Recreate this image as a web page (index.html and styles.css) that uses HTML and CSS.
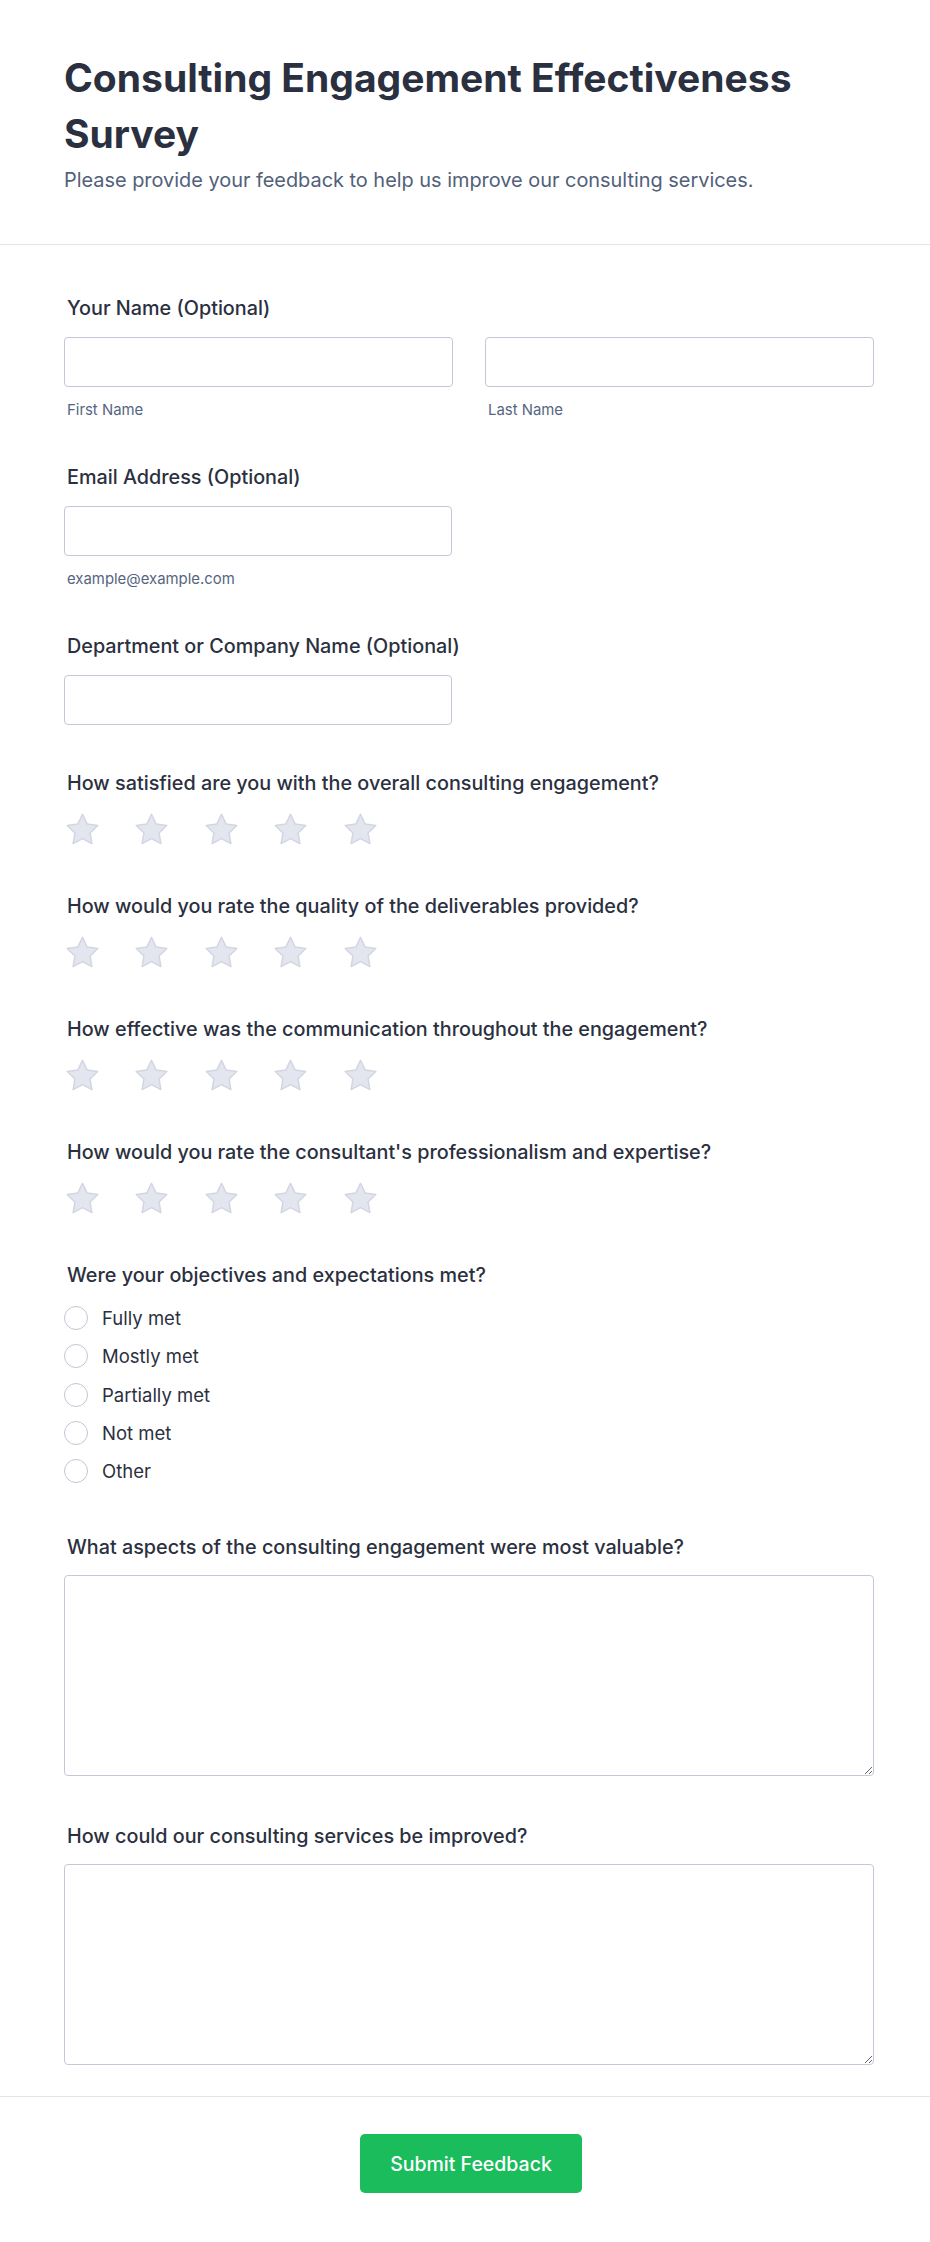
FILE: index.html
```html
<!DOCTYPE html>
<html lang="en">
<head>
<meta charset="utf-8">
<title>Consulting Engagement Effectiveness Survey</title>
<link rel="stylesheet" href="styles.css">
</head>
<body>
<div class="page">
  <header class="header">
    <h1 class="title">Consulting Engagement Effectiveness Survey</h1>
    <p class="subtitle">Please provide your feedback to help us improve our consulting services.</p>
  </header>

  <form class="form">
    <div class="field">
      <label class="label">Your Name (Optional)</label>
      <div class="name-grid">
        <div class="sub">
          <input class="input" type="text">
          <span class="hint">First Name</span>
        </div>
        <div class="sub">
          <input class="input" type="text">
          <span class="hint">Last Name</span>
        </div>
      </div>
    </div>

    <div class="field">
      <label class="label">Email Address (Optional)</label>
      <div class="half">
        <input class="input" type="email">
        <span class="hint">example@example.com</span>
      </div>
    </div>

    <div class="field">
      <label class="label">Department or Company Name (Optional)</label>
      <div class="half">
        <input class="input" type="text">
      </div>
    </div>

    <div class="field rating-field">
      <label class="label">How satisfied are you with the overall consulting engagement?</label>
      <div class="stars">
        <svg class="star" viewBox="0 0 40 38"><path d="M20 2.5l5.1 10.6 11.5 1.6-8.4 8.1 2 11.5L20 28.8l-10.2 5.5 2-11.5-8.4-8.1 11.5-1.6z"/></svg>
        <svg class="star" viewBox="0 0 40 38"><path d="M20 2.5l5.1 10.6 11.5 1.6-8.4 8.1 2 11.5L20 28.8l-10.2 5.5 2-11.5-8.4-8.1 11.5-1.6z"/></svg>
        <svg class="star" viewBox="0 0 40 38"><path d="M20 2.5l5.1 10.6 11.5 1.6-8.4 8.1 2 11.5L20 28.8l-10.2 5.5 2-11.5-8.4-8.1 11.5-1.6z"/></svg>
        <svg class="star" viewBox="0 0 40 38"><path d="M20 2.5l5.1 10.6 11.5 1.6-8.4 8.1 2 11.5L20 28.8l-10.2 5.5 2-11.5-8.4-8.1 11.5-1.6z"/></svg>
        <svg class="star" viewBox="0 0 40 38"><path d="M20 2.5l5.1 10.6 11.5 1.6-8.4 8.1 2 11.5L20 28.8l-10.2 5.5 2-11.5-8.4-8.1 11.5-1.6z"/></svg>
      </div>
    </div>

    <div class="field rating-field">
      <label class="label">How would you rate the quality of the deliverables provided?</label>
      <div class="stars">
        <svg class="star" viewBox="0 0 40 38"><path d="M20 2.5l5.1 10.6 11.5 1.6-8.4 8.1 2 11.5L20 28.8l-10.2 5.5 2-11.5-8.4-8.1 11.5-1.6z"/></svg>
        <svg class="star" viewBox="0 0 40 38"><path d="M20 2.5l5.1 10.6 11.5 1.6-8.4 8.1 2 11.5L20 28.8l-10.2 5.5 2-11.5-8.4-8.1 11.5-1.6z"/></svg>
        <svg class="star" viewBox="0 0 40 38"><path d="M20 2.5l5.1 10.6 11.5 1.6-8.4 8.1 2 11.5L20 28.8l-10.2 5.5 2-11.5-8.4-8.1 11.5-1.6z"/></svg>
        <svg class="star" viewBox="0 0 40 38"><path d="M20 2.5l5.1 10.6 11.5 1.6-8.4 8.1 2 11.5L20 28.8l-10.2 5.5 2-11.5-8.4-8.1 11.5-1.6z"/></svg>
        <svg class="star" viewBox="0 0 40 38"><path d="M20 2.5l5.1 10.6 11.5 1.6-8.4 8.1 2 11.5L20 28.8l-10.2 5.5 2-11.5-8.4-8.1 11.5-1.6z"/></svg>
      </div>
    </div>

    <div class="field rating-field">
      <label class="label">How effective was the communication throughout the engagement?</label>
      <div class="stars">
        <svg class="star" viewBox="0 0 40 38"><path d="M20 2.5l5.1 10.6 11.5 1.6-8.4 8.1 2 11.5L20 28.8l-10.2 5.5 2-11.5-8.4-8.1 11.5-1.6z"/></svg>
        <svg class="star" viewBox="0 0 40 38"><path d="M20 2.5l5.1 10.6 11.5 1.6-8.4 8.1 2 11.5L20 28.8l-10.2 5.5 2-11.5-8.4-8.1 11.5-1.6z"/></svg>
        <svg class="star" viewBox="0 0 40 38"><path d="M20 2.5l5.1 10.6 11.5 1.6-8.4 8.1 2 11.5L20 28.8l-10.2 5.5 2-11.5-8.4-8.1 11.5-1.6z"/></svg>
        <svg class="star" viewBox="0 0 40 38"><path d="M20 2.5l5.1 10.6 11.5 1.6-8.4 8.1 2 11.5L20 28.8l-10.2 5.5 2-11.5-8.4-8.1 11.5-1.6z"/></svg>
        <svg class="star" viewBox="0 0 40 38"><path d="M20 2.5l5.1 10.6 11.5 1.6-8.4 8.1 2 11.5L20 28.8l-10.2 5.5 2-11.5-8.4-8.1 11.5-1.6z"/></svg>
      </div>
    </div>

    <div class="field rating-field">
      <label class="label">How would you rate the consultant's professionalism and expertise?</label>
      <div class="stars">
        <svg class="star" viewBox="0 0 40 38"><path d="M20 2.5l5.1 10.6 11.5 1.6-8.4 8.1 2 11.5L20 28.8l-10.2 5.5 2-11.5-8.4-8.1 11.5-1.6z"/></svg>
        <svg class="star" viewBox="0 0 40 38"><path d="M20 2.5l5.1 10.6 11.5 1.6-8.4 8.1 2 11.5L20 28.8l-10.2 5.5 2-11.5-8.4-8.1 11.5-1.6z"/></svg>
        <svg class="star" viewBox="0 0 40 38"><path d="M20 2.5l5.1 10.6 11.5 1.6-8.4 8.1 2 11.5L20 28.8l-10.2 5.5 2-11.5-8.4-8.1 11.5-1.6z"/></svg>
        <svg class="star" viewBox="0 0 40 38"><path d="M20 2.5l5.1 10.6 11.5 1.6-8.4 8.1 2 11.5L20 28.8l-10.2 5.5 2-11.5-8.4-8.1 11.5-1.6z"/></svg>
        <svg class="star" viewBox="0 0 40 38"><path d="M20 2.5l5.1 10.6 11.5 1.6-8.4 8.1 2 11.5L20 28.8l-10.2 5.5 2-11.5-8.4-8.1 11.5-1.6z"/></svg>
      </div>
    </div>

    <div class="field radio-field">
      <label class="label">Were your objectives and expectations met?</label>
      <div class="radios">
        <label class="radio"><span class="circle"></span><span>Fully met</span></label>
        <label class="radio"><span class="circle"></span><span>Mostly met</span></label>
        <label class="radio"><span class="circle"></span><span>Partially met</span></label>
        <label class="radio"><span class="circle"></span><span>Not met</span></label>
        <label class="radio"><span class="circle"></span><span>Other</span></label>
      </div>
    </div>

    <div class="field text-field">
      <label class="label">What aspects of the consulting engagement were most valuable?</label>
      <textarea class="textarea"></textarea>
    </div>

    <div class="field text-field">
      <label class="label">How could our consulting services be improved?</label>
      <textarea class="textarea"></textarea>
    </div>
  </form>

  <footer class="footer">
    <button class="submit" type="button">Submit Feedback</button>
  </footer>
</div>
</body>
</html>
```

FILE: styles.css
```css
* { box-sizing: border-box; }

html, body {
  margin: 0;
  padding: 0;
  background: #ffffff;
}

body {
  font-family: Inter, "Noto Sans", "Liberation Sans", sans-serif;
  color: #2b3040;
}

.page {
  width: 930px;
  min-height: 2242px;
}

.header {
  padding: 50px 64px 50px 64px;
  border-bottom: 1px solid #e2e4ea;
}

.title {
  margin: 0;
  font-size: 39px;
  line-height: 56px;
  font-weight: 700;
  color: #2b3040;
}

.subtitle {
  margin: 4px 0 0 0;
  font-size: 19.9px;
  line-height: 28px;
  color: #52607a;
}

.form {
  padding: 51px 56px 31px 64px;
  display: flex;
  flex-direction: column;
}

.field {
  display: flex;
  flex-direction: column;
  margin-bottom: 46px;
}

.field:last-child { margin-bottom: 0; }

.label {
  font-size: 19.8px;
  line-height: 24px;
  font-weight: 500;
  color: #2b3040;
  padding-left: 3px;
  margin-bottom: 17px;
}

.name-grid {
  display: grid;
  grid-template-columns: 389px 389px;
  column-gap: 32px;
}

.sub, .half {
  display: flex;
  flex-direction: column;
}

.half { width: 388px; }

.input {
  height: 50px;
  width: 100%;
  border: 1px solid #c4c8d6;
  border-radius: 4px;
  background: #fff;
  font: inherit;
}

.hint {
  margin-top: 14px;
  padding-left: 3px;
  font-size: 14.9px;
  line-height: 18px;
  color: #56657f;
}

.rating-field { margin-bottom: 46px; }
.rating-field .label { margin-bottom: 16px; }

.stars {
  display: flex;
  gap: 32.4px;
  height: 37px;
  align-items: center;
}

.star {
  width: 37px;
  height: 35px;
  display: block;
}

.star path {
  fill: #e3e6ef;
  stroke: #d2d6e2;
  stroke-width: 1.6;
  stroke-linejoin: round;
}

.radio-field { margin-bottom: 52px; }
.radio-field .label { margin-bottom: 19px; }

.radios {
  display: flex;
  flex-direction: column;
  gap: 14.3px;
}

.radio {
  display: flex;
  align-items: center;
  gap: 14px;
  height: 24px;
  font-size: 18.5px;
  color: #2b3040;
}

.circle {
  width: 24px;
  height: 24px;
  border-radius: 50%;
  border: 1.5px solid #c2c6d3;
  background: #fff;
  flex: none;
}

.text-field { margin-bottom: 48px; }
.text-field .label { margin-bottom: 16px; }

.textarea {
  width: 810px;
  height: 201px;
  border: 1px solid #c4c8d6;
  border-radius: 4px;
  background: #fff;
  resize: vertical;
  font: inherit;
  display: block;
}

.footer {
  border-top: 1px solid #e2e4ea;
  display: flex;
  justify-content: center;
  padding: 37px 52px 50px 64px;
}

.submit {
  width: 222px;
  height: 59px;
  background: #1abc5c;
  color: #ffffff;
  border: none;
  border-radius: 5px;
  font-family: Inter, "Noto Sans", "Liberation Sans", sans-serif;
  font-size: 19.5px;
  font-weight: 500;
  cursor: pointer;
}
```
